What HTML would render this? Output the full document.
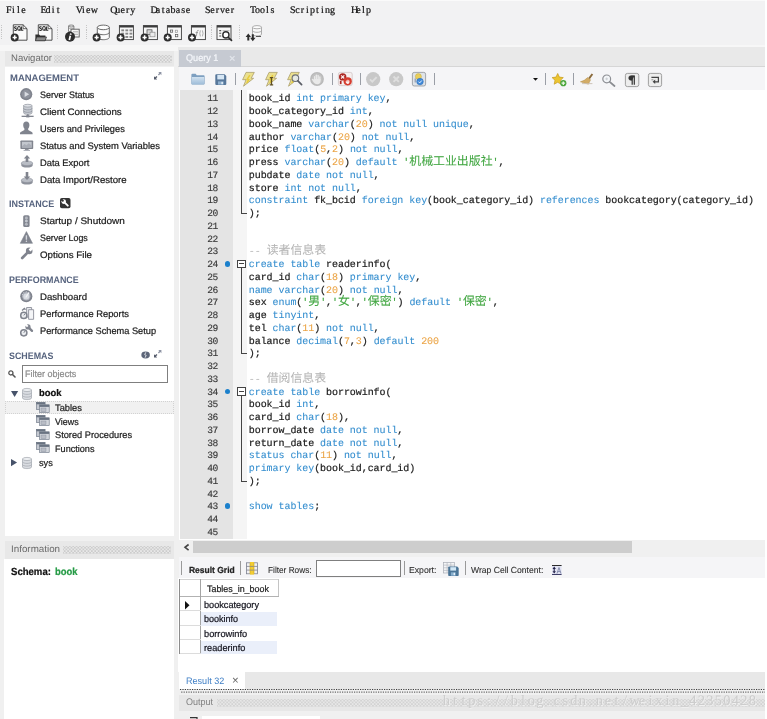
<!DOCTYPE html>
<html><head><meta charset="utf-8"><title>MySQL Workbench</title>
<style>
html,body{margin:0;padding:0}
body{width:767px;height:719px;overflow:hidden;position:relative;background:#f0f0f0;font-family:"Liberation Sans",sans-serif}
.b{position:absolute;box-sizing:border-box}
.t{position:absolute;white-space:pre;font-family:"Liberation Sans",sans-serif;-webkit-text-stroke:0.22px currentColor}
.fm{font-family:"Liberation Mono",monospace}
.fs{font-family:"Liberation Serif",serif}
.mn{font-size:10px;line-height:12px;color:#151515}
.wm{font-size:14.5px;line-height:18px;color:#cdcdcd;text-shadow:0.7px 0.7px 0 #f1f1f1;-webkit-text-stroke:0}
.wm i{display:inline-block;width:8.5px;text-align:center;font-style:normal}
.mn i{display:inline-block;width:5px;text-align:center;font-style:normal}
svg{position:absolute;overflow:visible}
#root{position:absolute;left:0;top:0;width:767px;height:719px;overflow:hidden;will-change:transform;text-rendering:geometricPrecision}
.k{color:#348ecf}.n{color:#eba445}.s{color:#43a743}.c{color:#b6b6b6}
.k,.n,.s,.c{-webkit-text-stroke:0.08px currentColor}
.ln{position:absolute;left:248.8px;white-space:pre;font:10px/13px "Liberation Mono",monospace;color:#1a1a1a;letter-spacing:-0.06px;-webkit-text-stroke:0.2px currentColor}
.no{position:absolute;left:180px;width:37.9px;text-align:right;font:9.6px/13px "Liberation Mono",monospace;color:#3a3a3a;letter-spacing:-0.4px;-webkit-text-stroke:0.15px currentColor}
.cj{display:inline-block;height:0;line-height:0;vertical-align:baseline;font-family:"Liberation Mono","Noto Sans CJK SC",monospace;font-size:11.9px;letter-spacing:0;font-weight:normal}
</style></head><body><div id="root">
<div class="b" style="left:0px;top:0px;width:767px;height:45.3px;background:#f2f2f3;"></div>
<div class="b" style="left:0px;top:45.3px;width:767px;height:5.8px;background:#f7f7f7;"></div>
<div class="b" style="left:0px;top:0px;width:767px;height:1px;background:#fafafa;"></div>
<div class="b" style="left:5px;top:50.7px;width:169px;height:15.8px;background:#e8e8e8;"></div>
<div class="b" style="left:54px;top:55px;width:118px;height:8px;background-image:radial-gradient(circle,#c6c6c6 0.55px,transparent 0.8px),radial-gradient(circle,#c6c6c6 0.55px,transparent 0.8px);background-size:3.4px 3.4px;background-position:0 0,1.7px 1.7px"></div>
<div class="b" style="left:5px;top:67px;width:169px;height:469px;background:#ffffff;"></div>
<div class="b" style="left:5px;top:541px;width:169px;height:17.5px;background:#e8e8e8;"></div>
<div class="b" style="left:63px;top:546px;width:108px;height:8px;background-image:radial-gradient(circle,#c6c6c6 0.55px,transparent 0.8px),radial-gradient(circle,#c6c6c6 0.55px,transparent 0.8px);background-size:3.4px 3.4px;background-position:0 0,1.7px 1.7px"></div>
<div class="b" style="left:4px;top:558.5px;width:170px;height:161px;background:#ffffff;"></div>
<div class="b" style="left:177.5px;top:47.4px;width:590px;height:19.9px;background:#e9e9e9;"></div>
<div class="b" style="left:177.5px;top:66.3px;width:590px;height:1px;background:#d6d6d6;"></div>
<div class="b" style="left:179.1px;top:49.7px;width:61.6px;height:17.6px;background:#c6cad2;"></div>
<div class="b" style="left:179px;top:67.3px;width:588px;height:23px;background:#f5f5f7;"></div>
<div class="b" style="left:179px;top:90.3px;width:588px;height:450px;background:#ffffff;"></div>
<div class="b" style="left:180px;top:90.3px;width:53.5px;height:448.6px;background:#e4e4e4;"></div>
<div class="b" style="left:233.3px;top:90.3px;width:14px;height:448.6px;background:#f5f5f5;"></div>
<div class="b" style="left:179px;top:540.3px;width:588px;height:17px;background:#f0f0f0;"></div>
<div class="b" style="left:193.4px;top:541px;width:439px;height:12px;background:#cdcdcd;"></div>
<div class="b" style="left:179px;top:557px;width:588px;height:21px;background:#f5f5f7;"></div>
<div class="b" style="left:178.3px;top:578px;width:588.7px;height:94px;background:#ffffff;"></div>
<div class="b" style="left:179px;top:672px;width:588px;height:16.5px;background:#e8e8e8;"></div>
<div class="b" style="left:179px;top:672px;width:66px;height:16.5px;background:#ffffff;"></div>
<svg style="left:179.600px;top:688px" width="586" height="6" viewBox="0 0 586 6"><path d="M0 1.500H586" stroke="#3c3c3c" stroke-width="1.100" stroke-dasharray="1.200 1.200"/><path d="M1.200 4.100H586" stroke="#6a6a6a" stroke-width="1.100" stroke-dasharray="1.200 1.200"/></svg>
<div class="b" style="left:179px;top:695px;width:588px;height:16.2px;background:#e7e7e7;"></div>
<div class="b" style="left:216.8px;top:698.6px;width:549px;height:8px;background-image:radial-gradient(circle,#cecece 0.55px,transparent 0.8px),radial-gradient(circle,#cecece 0.55px,transparent 0.8px);background-size:3.4px 3.4px;background-position:0 0,1.7px 1.7px"></div>
<div class="b" style="left:202.4px;top:715.5px;width:117.3px;height:4px;background:#ffffff;"></div>
<div class="b" style="left:765.3px;top:0px;width:1.7px;height:719px;background:#ffffff;"></div>
<div class="t fs mn" style="left:5.90px;top:5px"><i>F</i><i>i</i><i>l</i><i>e</i></div>
<div class="t fs mn" style="left:40.60px;top:5px"><i>E</i><i>d</i><i>i</i><i>t</i></div>
<div class="t fs mn" style="left:75.80px;top:5px"><i>V</i><i>i</i><i>e</i><i>w</i></div>
<div class="t fs mn" style="left:110.20px;top:5px"><i>Q</i><i>u</i><i>e</i><i>r</i><i>y</i></div>
<div class="t fs mn" style="left:150.60px;top:5px"><i>D</i><i>a</i><i>t</i><i>a</i><i>b</i><i>a</i><i>s</i><i>e</i></div>
<div class="t fs mn" style="left:204.90px;top:5px"><i>S</i><i>e</i><i>r</i><i>v</i><i>e</i><i>r</i></div>
<div class="t fs mn" style="left:249.90px;top:5px"><i>T</i><i>o</i><i>o</i><i>l</i><i>s</i></div>
<div class="t fs mn" style="left:289.90px;top:5px"><i>S</i><i>c</i><i>r</i><i>i</i><i>p</i><i>t</i><i>i</i><i>n</i><i>g</i></div>
<div class="t fs mn" style="left:350.90px;top:5px"><i>H</i><i>e</i><i>l</i><i>p</i></div>
<div class="t" style="left:10.70px;top:52.00px;font-size:9.6px;line-height:13px;color:#6a6a6a;transform:scaleX(0.9954);transform-origin:0 0;-webkit-text-stroke:0">Navigator</div>
<div class="t" style="left:9.70px;top:71.00px;font-size:9.4px;line-height:13px;font-weight:bold;color:#56637e;transform:scaleX(1.0101);transform-origin:0 0;-webkit-text-stroke:0">MANAGEMENT</div>
<div class="t" style="left:39.70px;top:88.00px;font-size:9.4px;line-height:13px;color:#1c1c1c;transform:scaleX(0.9570);transform-origin:0 0;">Server Status</div>
<div class="t" style="left:39.70px;top:105.00px;font-size:9.4px;line-height:13px;color:#1c1c1c;transform:scaleX(1.0380);transform-origin:0 0;">Client Connections</div>
<div class="t" style="left:39.70px;top:122.00px;font-size:9.4px;line-height:13px;color:#1c1c1c;transform:scaleX(0.9860);transform-origin:0 0;">Users and Privileges</div>
<div class="t" style="left:39.70px;top:139.00px;font-size:9.4px;line-height:13px;color:#1c1c1c;transform:scaleX(1.0017);transform-origin:0 0;">Status and System Variables</div>
<div class="t" style="left:39.70px;top:156.00px;font-size:9.4px;line-height:13px;color:#1c1c1c;transform:scaleX(0.9973);transform-origin:0 0;">Data Export</div>
<div class="t" style="left:39.70px;top:173.00px;font-size:9.4px;line-height:13px;color:#1c1c1c;transform:scaleX(1.0268);transform-origin:0 0;">Data Import/Restore</div>
<div class="t" style="left:9.20px;top:197.00px;font-size:9.4px;line-height:13px;font-weight:bold;color:#56637e;transform:scaleX(0.9567);transform-origin:0 0;-webkit-text-stroke:0">INSTANCE</div>
<div class="t" style="left:39.70px;top:214.00px;font-size:9.4px;line-height:13px;color:#1c1c1c;transform:scaleX(1.0631);transform-origin:0 0;">Startup / Shutdown</div>
<div class="t" style="left:39.70px;top:231.00px;font-size:9.4px;line-height:13px;color:#1c1c1c;transform:scaleX(0.9451);transform-origin:0 0;">Server Logs</div>
<div class="t" style="left:39.70px;top:248.00px;font-size:9.4px;line-height:13px;color:#1c1c1c;transform:scaleX(1.0388);transform-origin:0 0;">Options File</div>
<div class="t" style="left:9.20px;top:273.00px;font-size:9.4px;line-height:13px;font-weight:bold;color:#56637e;transform:scaleX(0.9492);transform-origin:0 0;-webkit-text-stroke:0">PERFORMANCE</div>
<div class="t" style="left:39.70px;top:290.00px;font-size:9.4px;line-height:13px;color:#1c1c1c;transform:scaleX(1.0264);transform-origin:0 0;">Dashboard</div>
<div class="t" style="left:39.70px;top:307.00px;font-size:9.4px;line-height:13px;color:#1c1c1c;transform:scaleX(0.9984);transform-origin:0 0;">Performance Reports</div>
<div class="t" style="left:39.70px;top:324.00px;font-size:9.4px;line-height:13px;color:#1c1c1c;transform:scaleX(0.9857);transform-origin:0 0;">Performance Schema Setup</div>
<div class="t" style="left:9.20px;top:349.00px;font-size:9.4px;line-height:13px;font-weight:bold;color:#56637e;transform:scaleX(0.9467);transform-origin:0 0;-webkit-text-stroke:0">SCHEMAS</div>
<div class="b" style="left:22.3px;top:365.3px;width:146.2px;height:17.4px;background:#ffffff;border:1px solid #7f7f7f"></div>
<div class="t" style="left:24.70px;top:367.00px;font-size:9.4px;line-height:13px;color:#8c8c8c;transform:scaleX(0.9628);transform-origin:0 0;">Filter objects</div>
<div class="b" style="left:5.2px;top:401.3px;width:168.5px;height:13px;background:#f1f1f1;border:1px dotted #d2d2d2"></div>
<div class="t" style="left:38.60px;top:387.00px;font-size:9.6px;line-height:13px;font-weight:bold;color:#111;transform:scaleX(0.9812);transform-origin:0 0;">book</div>
<div class="t" style="left:55.00px;top:401.00px;font-size:9.4px;line-height:13px;color:#1c1c1c;transform:scaleX(0.9936);transform-origin:0 0;">Tables</div>
<div class="t" style="left:55.00px;top:415.00px;font-size:9.4px;line-height:13px;color:#1c1c1c;transform:scaleX(0.9516);transform-origin:0 0;">Views</div>
<div class="t" style="left:55.00px;top:428.00px;font-size:9.4px;line-height:13px;color:#1c1c1c;transform:scaleX(0.9850);transform-origin:0 0;">Stored Procedures</div>
<div class="t" style="left:55.00px;top:442.00px;font-size:9.4px;line-height:13px;color:#1c1c1c;transform:scaleX(0.9717);transform-origin:0 0;">Functions</div>
<div class="t" style="left:38.60px;top:456.00px;font-size:9.4px;line-height:13px;color:#1c1c1c;transform:scaleX(0.9787);transform-origin:0 0;">sys</div>
<div class="t" style="left:11.10px;top:543.00px;font-size:9.6px;line-height:13px;color:#6a6a6a;transform:scaleX(1.0224);transform-origin:0 0;-webkit-text-stroke:0">Information</div>
<div class="t" style="left:11.10px;top:566.00px;font-size:10.3px;line-height:13px;font-weight:bold;color:#111;transform:scaleX(0.9293);transform-origin:0 0;">Schema:</div>
<div class="t" style="left:54.80px;top:566.00px;font-size:10.3px;line-height:13px;font-weight:bold;color:#239a44;transform:scaleX(0.9145);transform-origin:0 0;">book</div>
<div class="t" style="left:185.60px;top:52.00px;font-size:9.6px;line-height:13px;color:#f4f6fa;transform:scaleX(0.9488);transform-origin:0 0;">Query 1</div>
<div class="t" style="left:229.10px;top:52.00px;font-size:11px;line-height:14px;color:#e3e6ec;">×</div>
<div class="t" style="left:188.90px;top:564.00px;font-size:8.8px;line-height:12px;font-weight:bold;color:#222;transform:scaleX(0.9635);transform-origin:0 0;">Result Grid</div>
<div class="t" style="left:267.90px;top:564.00px;font-size:8.8px;line-height:12px;color:#2a2a2a;transform:scaleX(0.9386);transform-origin:0 0;-webkit-text-stroke:0.08px currentColor">Filter Rows:</div>
<div class="t" style="left:409.20px;top:564.00px;font-size:8.8px;line-height:12px;color:#2a2a2a;transform:scaleX(0.9828);transform-origin:0 0;-webkit-text-stroke:0.08px currentColor">Export:</div>
<div class="t" style="left:470.50px;top:564.00px;font-size:8.8px;line-height:12px;color:#2a2a2a;transform:scaleX(0.9746);transform-origin:0 0;-webkit-text-stroke:0.08px currentColor">Wrap Cell Content:</div>
<div class="b" style="left:316.3px;top:560px;width:84.3px;height:16.6px;background:#ffffff;border:1px solid #7f7f7f"></div>
<div class="b" style="left:181.0px;top:561px;width:1px;height:14px;background:#9a9a9a;"></div>
<div class="b" style="left:239.7px;top:561px;width:1px;height:14px;background:#9a9a9a;"></div>
<div class="b" style="left:404.0px;top:561px;width:1px;height:14px;background:#9a9a9a;"></div>
<div class="b" style="left:465.0px;top:561px;width:1px;height:14px;background:#9a9a9a;"></div>
<div class="b" style="left:200.6px;top:611.9px;width:76.70000000000002px;height:14.3px;background:#eaeffa;"></div>
<div class="b" style="left:200.6px;top:640.6px;width:76.70000000000002px;height:13.2px;background:#eaeffa;"></div>
<div class="b" style="left:179.7px;top:578.8px;width:99.10000000000002px;height:1px;background:#d2d2d2;"></div>
<div class="b" style="left:179.7px;top:595.8px;width:99.10000000000002px;height:1px;background:#b2b2b2;"></div>
<div class="b" style="left:179.1px;top:578.6px;width:1px;height:75.6px;background:#8c8c8c;"></div>
<div class="b" style="left:200.2px;top:578.6px;width:1px;height:75.6px;background:#a4a4a4;"></div>
<div class="b" style="left:278.3px;top:578.6px;width:1px;height:17.8px;background:#c4c4c4;"></div>
<div class="b" style="left:179.7px;top:610.3px;width:20.900000000000006px;height:1px;background:#dcdcdc;"></div>
<div class="b" style="left:179.7px;top:624.6px;width:20.900000000000006px;height:1px;background:#dcdcdc;"></div>
<div class="b" style="left:179.7px;top:639px;width:20.900000000000006px;height:1px;background:#dcdcdc;"></div>
<div class="b" style="left:179.7px;top:653.4px;width:20.900000000000006px;height:1px;background:#dcdcdc;"></div>
<div class="t" style="left:207.10px;top:583.00px;font-size:9.3px;line-height:12px;color:#222;transform:scaleX(0.9577);transform-origin:0 0;">Tables_in_book</div>
<div class="t" style="left:203.50px;top:598.00px;font-size:9.4px;line-height:13px;color:#15151f;transform:scaleX(0.9763);transform-origin:0 0;">bookcategory</div>
<div class="t" style="left:203.50px;top:612.00px;font-size:9.4px;line-height:13px;color:#15151f;transform:scaleX(0.9623);transform-origin:0 0;">bookinfo</div>
<div class="t" style="left:203.50px;top:627.00px;font-size:9.4px;line-height:13px;color:#15151f;transform:scaleX(0.9866);transform-origin:0 0;">borrowinfo</div>
<div class="t" style="left:203.50px;top:641.00px;font-size:9.4px;line-height:13px;color:#15151f;transform:scaleX(0.9804);transform-origin:0 0;">readerinfo</div>
<div class="t" style="left:185.70px;top:674.00px;font-size:9.4px;line-height:13px;color:#3f7fc6;transform:scaleX(0.9670);transform-origin:0 0;-webkit-text-stroke:0">Result 32</div>
<div class="t" style="left:232.00px;top:674.00px;font-size:11.5px;line-height:14px;color:#6a6a6a;-webkit-text-stroke:0">×</div>
<div class="t" style="left:185.50px;top:696.00px;font-size:9.5px;line-height:13px;color:#808080;transform:scaleX(0.9468);transform-origin:0 0;-webkit-text-stroke:0">Output</div>
<div class="t fs wm" style="left:442.2px;top:692px"><i>h</i><i>t</i><i>t</i><i>p</i><i>s</i><i>:</i><i>/</i><i>/</i><i>b</i><i>l</i><i>o</i><i>g</i><i>.</i><i>c</i><i>s</i><i>d</i><i>n</i><i>.</i><i>n</i><i>e</i><i>t</i><i>/</i><i>w</i><i>e</i><i>i</i><i>x</i><i>i</i><i>n</i><i>_</i><i>4</i><i>2</i><i>3</i><i>5</i><i>0</i><i>4</i><i>2</i><i>8</i></div>
<div class="no" style="top:92.28px">11</div>
<div class="no" style="top:105.03px">12</div>
<div class="no" style="top:117.78px">13</div>
<div class="no" style="top:130.53px">14</div>
<div class="no" style="top:143.28px">15</div>
<div class="no" style="top:156.03px">16</div>
<div class="no" style="top:168.78px">17</div>
<div class="no" style="top:181.53px">18</div>
<div class="no" style="top:194.28px">19</div>
<div class="no" style="top:207.03px">20</div>
<div class="no" style="top:219.78px">21</div>
<div class="no" style="top:232.53px">22</div>
<div class="no" style="top:245.28px">23</div>
<div class="no" style="top:258.03px">24</div>
<div class="no" style="top:270.78px">25</div>
<div class="no" style="top:283.53px">26</div>
<div class="no" style="top:296.28px">27</div>
<div class="no" style="top:309.03px">28</div>
<div class="no" style="top:321.78px">29</div>
<div class="no" style="top:334.53px">30</div>
<div class="no" style="top:347.28px">31</div>
<div class="no" style="top:360.03px">32</div>
<div class="no" style="top:372.78px">33</div>
<div class="no" style="top:385.53px">34</div>
<div class="no" style="top:398.28px">35</div>
<div class="no" style="top:411.03px">36</div>
<div class="no" style="top:423.78px">37</div>
<div class="no" style="top:436.53px">38</div>
<div class="no" style="top:449.28px">39</div>
<div class="no" style="top:462.03px">40</div>
<div class="no" style="top:474.78px">41</div>
<div class="no" style="top:487.53px">42</div>
<div class="no" style="top:500.28px">43</div>
<div class="no" style="top:513.03px">44</div>
<div class="no" style="top:525.78px">45</div>
<div class="ln" style="top:93.28px">book_id <span class="k">int</span> <span class="k">primary</span> <span class="k">key</span>,</div>
<div class="ln" style="top:106.03px">book_category_id <span class="k">int</span>,</div>
<div class="ln" style="top:118.78px">book_name <span class="k">varchar</span>(<span class="n">20</span>) <span class="k">not</span> <span class="k">null</span> <span class="k">unique</span>,</div>
<div class="ln" style="top:131.53px">author <span class="k">varchar</span>(<span class="n">20</span>) <span class="k">not</span> <span class="k">null</span>,</div>
<div class="ln" style="top:144.28px">price <span class="k">float</span>(<span class="n">5</span>,<span class="n">2</span>) <span class="k">not</span> <span class="k">null</span>,</div>
<div class="ln" style="top:157.03px">press <span class="k">varchar</span>(<span class="n">20</span>) <span class="k">default</span> <span class="s">&#x27;<span class="cj">机械工业出版社</span>&#x27;</span>,</div>
<div class="ln" style="top:169.78px">pubdate <span class="k">date</span> <span class="k">not</span> <span class="k">null</span>,</div>
<div class="ln" style="top:182.53px">store <span class="k">int</span> <span class="k">not</span> <span class="k">null</span>,</div>
<div class="ln" style="top:195.28px"><span class="k">constraint</span> fk_bcid <span class="k">foreign</span> <span class="k">key</span>(book_category_id) <span class="k">references</span> bookcategory(category_id)</div>
<div class="ln" style="top:208.03px">);</div>
<div class="ln" style="top:246.28px"><span class="c">-- <span class="cj">读者信息表</span></span></div>
<div class="ln" style="top:259.03px"><span class="k">create</span> <span class="k">table</span> readerinfo(</div>
<div class="ln" style="top:271.78px">card_id <span class="k">char</span>(<span class="n">18</span>) <span class="k">primary</span> <span class="k">key</span>,</div>
<div class="ln" style="top:284.53px"><span class="k">name</span> <span class="k">varchar</span>(<span class="n">20</span>) <span class="k">not</span> <span class="k">null</span>,</div>
<div class="ln" style="top:297.28px">sex <span class="k">enum</span>(<span class="s">&#x27;<span class="cj">男</span>&#x27;</span>,<span class="s">&#x27;<span class="cj">女</span>&#x27;</span>,<span class="s">&#x27;<span class="cj">保密</span>&#x27;</span>) <span class="k">default</span> <span class="s">&#x27;<span class="cj">保密</span>&#x27;</span>,</div>
<div class="ln" style="top:310.03px">age <span class="k">tinyint</span>,</div>
<div class="ln" style="top:322.78px">tel <span class="k">char</span>(<span class="n">11</span>) <span class="k">not</span> <span class="k">null</span>,</div>
<div class="ln" style="top:335.53px">balance <span class="k">decimal</span>(<span class="n">7</span>,<span class="n">3</span>) <span class="k">default</span> <span class="n">200</span></div>
<div class="ln" style="top:348.28px">);</div>
<div class="ln" style="top:373.78px"><span class="c">-- <span class="cj">借阅信息表</span></span></div>
<div class="ln" style="top:386.53px"><span class="k">create</span> <span class="k">table</span> borrowinfo(</div>
<div class="ln" style="top:399.28px">book_id <span class="k">int</span>,</div>
<div class="ln" style="top:412.03px">card_id <span class="k">char</span>(<span class="n">18</span>),</div>
<div class="ln" style="top:424.78px">borrow_date <span class="k">date</span> <span class="k">not</span> <span class="k">null</span>,</div>
<div class="ln" style="top:437.53px">return_date <span class="k">date</span> <span class="k">not</span> <span class="k">null</span>,</div>
<div class="ln" style="top:450.28px"><span class="k">status</span> <span class="k">char</span>(<span class="n">11</span>) <span class="k">not</span> <span class="k">null</span>,</div>
<div class="ln" style="top:463.03px"><span class="k">primary</span> <span class="k">key</span>(book_id,card_id)</div>
<div class="ln" style="top:475.78px">);</div>
<div class="ln" style="top:501.28px"><span class="k">show</span> <span class="k">tables</span>;</div>
<div class="b" style="left:224.6px;top:261.00px;width:5.8px;height:5.8px;border-radius:50%;background:#1b80cc"></div>
<div class="b" style="left:224.6px;top:388.50px;width:5.8px;height:5.8px;border-radius:50%;background:#1b80cc"></div>
<div class="b" style="left:224.6px;top:503.25px;width:5.8px;height:5.8px;border-radius:50%;background:#1b80cc"></div>
<div class="b" style="left:241.0px;top:90px;width:1px;height:123.9px;background:#444;"></div>
<div class="b" style="left:241px;top:213.1px;width:5.7px;height:1px;background:#444;"></div>
<div class="b" style="left:241.0px;top:267.9px;width:1px;height:86.25px;background:#444;"></div>
<div class="b" style="left:241px;top:353.34999999999997px;width:5.7px;height:1px;background:#444;"></div>
<div class="b" style="left:237.2px;top:259.5px;width:8.8px;height:8.8px;background:#ffffff;border:1px solid #444"></div>
<div class="b" style="left:239.3px;top:263.4px;width:4.6px;height:1px;background:#444;"></div>
<div class="b" style="left:241.0px;top:395.4px;width:1px;height:86.25px;background:#444;"></div>
<div class="b" style="left:241px;top:480.84999999999997px;width:5.7px;height:1px;background:#444;"></div>
<div class="b" style="left:237.2px;top:387.0px;width:8.8px;height:8.8px;background:#ffffff;border:1px solid #444"></div>
<div class="b" style="left:239.3px;top:390.9px;width:4.6px;height:1px;background:#444;"></div>
<svg style="left:20.4px;top:87.6px" width="12.4" height="12.4" viewBox="0 0 12.4 12.4"><circle cx="6.2" cy="6.2" r="6.1" fill="#80848e"/><circle cx="6.2" cy="6.2" r="4.4" fill="#8f939d"/><path d="M4.6 3.5 L9.2 6.2 L4.6 8.9Z" fill="#d9dce2"/></svg>
<svg style="left:20.5px;top:104px" width="13" height="13.5" viewBox="0 0 13 13.5"><path d="M2.6 1.6v7.2c0 .9 1.9 1.6 4.2 1.6s4.2-.7 4.2-1.6V1.6z" fill="#c9cdd4" stroke="#9398a1" stroke-width=".7"/><ellipse cx="6.8" cy="1.7" rx="4.2" ry="1.4" fill="#dfe2e7" stroke="#9398a1" stroke-width=".7"/><path d="M2.6 4.4c0 .9 1.9 1.5 4.2 1.5s4.2-.6 4.2-1.5M2.6 6.8c0 .9 1.9 1.5 4.2 1.5s4.2-.6 4.2-1.5" fill="none" stroke="#8a8f99" stroke-width=".8"/><rect x="6.1" y="10.2" width="1.4" height="2" fill="#80848e"/><rect x=".6" y="11.7" width="12" height="1.3" fill="#80848e"/><rect x="5.2" y="11.2" width="3.2" height="2.2" fill="#80848e"/></svg>
<svg style="left:20.4px;top:121px" width="12.6" height="13.4" viewBox="0 0 12.6 13.4"><path d="M6.3.4c2 0 3.1 1.4 3.1 3.6 0 1.5-.5 2.8-1.2 3.6v1.5l3.6 1.8c.5.3.8.8.8 1.4v.9H0v-.9c0-.6.3-1.1.8-1.4l3.6-1.8V7.6C3.700 6.800 3.200 5.500 3.200 4 3.200 1.800 4.300.4 6.300.4z" fill="#80848e"/></svg>
<svg style="left:20.4px;top:140px" width="13.6" height="11" viewBox="0 0 13.6 11"><rect x=".4" y=".4" width="12.8" height="8.6" rx=".8" fill="#80848e"/><rect x="1.9" y="1.8" width="9.8" height="5.8" fill="#c3c7ce"/><path d="M2 6.200 L4.500 4 L6.500 5.200 L8.800 3.200 L11.600 5.600V7.600H2z" fill="#a9adb6"/><rect x="5" y="9" width="3.600" height=".9" fill="#80848e"/><rect x="3.600" y="9.900" width="6.400" height=".9" fill="#9da1aa"/></svg>
<svg style="left:20.6px;top:155.3px" width="12" height="13" viewBox="0 0 12 13"><path d="M.3 8.200v2.200c0 1.200 2.500 2.200 5.700 2.200s5.700-1 5.700-2.200V8.200z" fill="#8d919b"/><ellipse cx="6" cy="8.200" rx="5.700" ry="2.300" fill="#b9bdc5" stroke="#8d919b" stroke-width=".5"/><path d="M6 0 L9.200 3.400 H7.300 V7 H4.700 V3.400 H2.800Z" fill="#80848e"/></svg>
<svg style="left:20.6px;top:172.3px" width="12" height="13" viewBox="0 0 12 13"><path d="M.3 8.200v2.200c0 1.200 2.500 2.200 5.700 2.200s5.700-1 5.700-2.200V8.200z" fill="#8d919b"/><ellipse cx="6" cy="8.200" rx="5.700" ry="2.300" fill="#b9bdc5" stroke="#8d919b" stroke-width=".5"/><path d="M4.700 0 H7.300 V4.400 H9.300 L6 8 L2.700 4.400 H4.700Z" fill="#80848e"/></svg>
<svg style="left:60px;top:198px" width="10.5" height="10.2" viewBox="0 0 10.5 10.2"><rect width="10.500" height="10.200" rx="1.800" fill="#333"/><path d="M3.70 3.60L7.80 7.70" stroke="#fff" stroke-width="1.9" stroke-linecap="round"/><circle cx="3.70" cy="3.60" r="2.3" fill="#fff"/><path d="M3.46 3.36L1.67 1.57" stroke="#333" stroke-width="1.84"/></svg>
<svg style="left:22.8px;top:214.5px" width="6.8" height="12.2" viewBox="0 0 6.8 12.2"><rect x=".2" y=".2" width="6.400" height="11.800" rx="1.600" fill="#80848e"/><circle cx="3.400" cy="2.900" r="1.500" fill="#b4b8c0"/><circle cx="3.400" cy="6.100" r="1.500" fill="#c4c8cf"/><circle cx="3.400" cy="9.300" r="1.500" fill="#b4b8c0"/></svg>
<svg style="left:20.2px;top:231px" width="12.8" height="12.8" viewBox="0 0 12.8 12.8"><path d="M6.400.6 L12.500 12.300 H.3Z" fill="#80848e" stroke="#80848e" stroke-width=".6" stroke-linejoin="round"/><rect x="5.700" y="4.200" width="1.400" height="4.600" rx=".5" fill="#d5d8de"/><rect x="5.700" y="9.600" width="1.400" height="1.400" rx=".4" fill="#d5d8de"/></svg>
<svg style="left:20.4px;top:247.4px" width="13" height="13.4" viewBox="0 0 13 13.4"><path d="M9.20 3.90L2.20 11.00" stroke="#80848e" stroke-width="2.7" stroke-linecap="round"/><circle cx="9.20" cy="3.90" r="3.3" fill="#80848e"/><path d="M9.55 3.55L12.10 0.96" stroke="#fff" stroke-width="2.64"/></svg>
<svg style="left:20.2px;top:289.8px" width="12.8" height="12.4" viewBox="0 0 12.8 12.4"><circle cx="6.300" cy="6.200" r="6.100" fill="#80848e"/><circle cx="6.300" cy="6.200" r="4.200" fill="#aeb2bb"/><circle cx="6.300" cy="6.600" r="3" fill="#d9dce2"/><path d="M6.100 7 L8.700 2.900" stroke="#f4f5f7" stroke-width="1.300" stroke-linecap="round"/><path d="M2 4.300l.9.500M3.500 2.300l.6.800M6.300 1.300v.9" stroke="#e2e4e9" stroke-width=".8"/></svg>
<svg style="left:20.2px;top:306.6px" width="14" height="13" viewBox="0 0 14 13"><path d="M6.600.5h5v9.600H6.600z" fill="#e9ebef" stroke="#8c909a" stroke-width=".9"/><path d="M8.600 2.700h5v9.600H8.600z" fill="#f4f5f7" stroke="#8c909a" stroke-width=".9"/><circle cx="3.800" cy="8.400" r="3.100" fill="#eceef1" stroke="#80848e" stroke-width="1.500"/><path d="M3.800 8.400 L5.100 6.600" stroke="#80848e" stroke-width="1"/><path d="M2 3.600 L4.400 1.500 L5.500 2.700" fill="none" stroke="#80848e" stroke-width="1.300"/></svg>
<svg style="left:20.2px;top:324.2px" width="14" height="13" viewBox="0 0 14 13"><circle cx="3.800" cy="8.800" r="3.100" fill="#eceef1" stroke="#80848e" stroke-width="1.500"/><path d="M3.800 8.800 L5.100 7" stroke="#80848e" stroke-width="1"/><path d="M8.00 2.90L12.00 6.90" stroke="#80848e" stroke-width="2.3" stroke-linecap="round"/><circle cx="8.00" cy="2.90" r="2.6" fill="#80848e"/><path d="M7.72 2.62L5.70 0.60" stroke="#fff" stroke-width="2.08"/></svg>
<svg style="left:140.6px;top:350.6px" width="9.2" height="8" viewBox="0 0 9.2 8"><ellipse cx="4.600" cy="3.900" rx="4.300" ry="3.500" fill="#5d6679"/><path d="M4.800 1.300L3.700 3.700L5.200 4.300L4.100 6.700" fill="none" stroke="#e8eaee" stroke-width=".9"/></svg>
<svg style="left:154.2px;top:350.4px" width="7.4" height="7.4" viewBox="0 0 8 8"><path d="M4.600 0 H8 V3.400 L6.800 2.200 L5.300 3.700 L4.300 2.700 L5.800 1.200Z" fill="#8d93a3"/><path d="M3.400 8 H0 V4.600 L1.200 5.800 L2.700 4.300 L3.700 5.300 L2.200 6.800Z" fill="#555b6b"/></svg>
<svg style="left:154px;top:72.3px" width="7.4" height="7.4" viewBox="0 0 8 8"><path d="M4.600 0 H8 V3.400 L6.800 2.200 L5.300 3.700 L4.300 2.700 L5.800 1.200Z" fill="#8d93a3"/><path d="M3.400 8 H0 V4.600 L1.200 5.800 L2.700 4.300 L3.700 5.300 L2.200 6.800Z" fill="#555b6b"/></svg>
<svg style="left:8.4px;top:370px" width="8" height="8" viewBox="0 0 8 8"><circle cx="2.900" cy="2.900" r="2.100" fill="none" stroke="#555" stroke-width="1.300"/><path d="M4.500 4.500 L7 7" stroke="#555" stroke-width="1.600" stroke-linecap="round"/></svg>
<svg style="left:10.7px;top:391.2px" width="7.2" height="6.2" viewBox="0 0 7.2 6.2"><path d="M0 0H7.200L3.600 6.100Z" fill="#47536a"/></svg>
<svg style="left:10.8px;top:459.2px" width="6.2" height="7.2" viewBox="0 0 6.2 7.2"><path d="M0 0V7.200L6.100 3.600Z" fill="#47536a"/></svg>
<svg style="left:22px;top:387.7px" width="10" height="12" viewBox="0 0 10 12"><path d="M.5 2v8c0 .9 2 1.600 4.500 1.600s4.500-.7 4.500-1.600V2z" fill="#d9dce1" stroke="#a2a6ae" stroke-width=".7"/><ellipse cx="5" cy="2" rx="4.500" ry="1.600" fill="#eceef1" stroke="#a2a6ae" stroke-width=".7"/><path d="M.5 4.800c0 .9 2 1.600 4.500 1.600s4.500-.7 4.500-1.600M.5 7.500c0 .9 2 1.600 4.500 1.600s4.500-.7 4.500-1.600" fill="none" stroke="#a2a6ae" stroke-width=".7"/></svg>
<svg style="left:22px;top:456.5px" width="10" height="12" viewBox="0 0 10 12"><path d="M.5 2v8c0 .9 2 1.600 4.500 1.600s4.500-.7 4.500-1.600V2z" fill="#d9dce1" stroke="#a2a6ae" stroke-width=".7"/><ellipse cx="5" cy="2" rx="4.500" ry="1.600" fill="#eceef1" stroke="#a2a6ae" stroke-width=".7"/><path d="M.5 4.800c0 .9 2 1.600 4.500 1.600s4.500-.7 4.500-1.600M.5 7.500c0 .9 2 1.600 4.500 1.600s4.500-.7 4.500-1.600" fill="none" stroke="#a2a6ae" stroke-width=".7"/></svg>
<svg style="left:36.3px;top:401.6px" width="13.6" height="11" viewBox="0 0 13.6 11"><rect x=".3" y=".3" width="8.800" height="7.400" fill="#c5c9d1" stroke="#6a7482" stroke-width=".6"/><rect x=".3" y=".3" width="8.800" height="2" fill="#6a7482"/><rect x="3.400" y="2.800" width="9.800" height="7.800" fill="#d3d6dc" stroke="#6a7482" stroke-width=".6"/><rect x="3.400" y="2.800" width="9.800" height="2.100" fill="#6a7482"/><rect x="5" y="6" width="5" height="3.600" fill="#b9bdc6" stroke="#858d9a" stroke-width=".4"/></svg>
<svg style="left:36.3px;top:415.3px" width="13.6" height="11" viewBox="0 0 13.6 11"><rect x=".3" y=".3" width="8.800" height="7.400" fill="#c5c9d1" stroke="#6a7482" stroke-width=".6"/><rect x=".3" y=".3" width="8.800" height="2" fill="#6a7482"/><rect x="3.400" y="2.800" width="9.800" height="7.800" fill="#d3d6dc" stroke="#6a7482" stroke-width=".6"/><rect x="3.400" y="2.800" width="9.800" height="2.100" fill="#6a7482"/><rect x="5" y="6" width="5" height="3.600" fill="#b9bdc6" stroke="#858d9a" stroke-width=".4"/></svg>
<svg style="left:36.3px;top:428.6px" width="13.6" height="11" viewBox="0 0 13.6 11"><rect x=".3" y=".3" width="8.800" height="7.400" fill="#c5c9d1" stroke="#6a7482" stroke-width=".6"/><rect x=".3" y=".3" width="8.800" height="2" fill="#6a7482"/><rect x="3.400" y="2.800" width="9.800" height="7.800" fill="#d3d6dc" stroke="#6a7482" stroke-width=".6"/><rect x="3.400" y="2.800" width="9.800" height="2.100" fill="#6a7482"/><rect x="5" y="6" width="5" height="3.600" fill="#b9bdc6" stroke="#858d9a" stroke-width=".4"/></svg>
<svg style="left:36.3px;top:442.3px" width="13.6" height="11" viewBox="0 0 13.6 11"><rect x=".3" y=".3" width="8.800" height="7.400" fill="#c5c9d1" stroke="#6a7482" stroke-width=".6"/><rect x=".3" y=".3" width="8.800" height="2" fill="#6a7482"/><rect x="3.400" y="2.800" width="9.800" height="7.800" fill="#d3d6dc" stroke="#6a7482" stroke-width=".6"/><rect x="3.400" y="2.800" width="9.800" height="2.100" fill="#6a7482"/><rect x="5" y="6" width="5" height="3.600" fill="#b9bdc6" stroke="#858d9a" stroke-width=".4"/></svg>
<div class="b" style="left:1.2000000000000002px;top:25px;width:1.2px;height:14.5px;background:repeating-linear-gradient(180deg,#c6c6c6 0 1.1px,transparent 1.1px 2.2px)"></div>
<div class="b" style="left:57.1px;top:25px;width:1.2px;height:14.5px;background:repeating-linear-gradient(180deg,#c6c6c6 0 1.1px,transparent 1.1px 2.2px)"></div>
<div class="b" style="left:86.30000000000001px;top:25px;width:1.2px;height:14.5px;background:repeating-linear-gradient(180deg,#c6c6c6 0 1.1px,transparent 1.1px 2.2px)"></div>
<div class="b" style="left:210.6px;top:25px;width:1.2px;height:14.5px;background:repeating-linear-gradient(180deg,#c6c6c6 0 1.1px,transparent 1.1px 2.2px)"></div>
<div class="b" style="left:239.0px;top:25px;width:1.2px;height:14.5px;background:repeating-linear-gradient(180deg,#c6c6c6 0 1.1px,transparent 1.1px 2.2px)"></div>
<svg style="left:11px;top:24px" width="18" height="18" viewBox="0 0 18 18"><path d="M2.300.8h9.800l3.900 3.900v11.500H2.300z" fill="#fafafa" stroke="#3c3c3c" stroke-width=".9"/><path d="M12.100.8v3.900h3.900" fill="none" stroke="#3c3c3c" stroke-width=".8"/><g transform="translate(0.0 0.0)" fill="none" stroke="#2a2a2a" stroke-width="1.05"><path d="M5.700 3.100C4.400 2.200 3.300 2.900 3.600 3.800 4 4.700 5.900 4.500 5.700 5.700 5.500 6.600 4.100 6.600 3.300 5.900"/><ellipse cx="8" cy="4.400" rx="1.350" ry="1.900"/><path d="M8.400 5.600L9.500 6.700M10.600 2.400V6.300H12.300"/></g><circle cx="3.7" cy="13.4" r="4.0" fill="#2d2d2d"/><path d="M1.6 13.4H5.800000000000001M3.7 11.3V15.5" stroke="#fff" stroke-width="1.500"/></svg>
<svg style="left:34.7px;top:24px" width="18" height="18" viewBox="0 0 18 18"><path d="M3.300.8h9.800l3.900 3.900v11.500H3.300z" fill="#fafafa" stroke="#3c3c3c" stroke-width=".9"/><path d="M13.100.8v3.900h3.900" fill="none" stroke="#3c3c3c" stroke-width=".8"/><g transform="translate(1.0 0.0)" fill="none" stroke="#2a2a2a" stroke-width="1.05"><path d="M5.700 3.100C4.400 2.200 3.300 2.900 3.600 3.800 4 4.700 5.900 4.500 5.700 5.700 5.500 6.600 4.100 6.600 3.300 5.900"/><ellipse cx="8" cy="4.400" rx="1.350" ry="1.900"/><path d="M8.400 5.600L9.500 6.700M10.600 2.400V6.300H12.300"/></g><path d="M.4 10.400h3.700l1 1.200h5.300v5.200H.4z" fill="#2f2f2f"/><path d="M1.700 13h9.800l-1.400 3.800H.4z" fill="#8a8a8a" stroke="#2f2f2f" stroke-width=".7"/></svg>
<svg style="left:63.5px;top:24px" width="17" height="18" viewBox="0 0 17 18"><path d="M4.500 2v5.500h5.400V2z" fill="#f4f4f4" stroke="#6e6e6e" stroke-width=".8"/><ellipse cx="7.200" cy="2" rx="2.700" ry="1" fill="#f4f4f4" stroke="#6e6e6e" stroke-width=".8"/><path d="M4.500 4.200q2.700 1.400 5.400 0" fill="none" stroke="#8a8a8a" stroke-width=".6"/><rect x="7" y="5.200" width="8.200" height="7.800" fill="#f6f6f6" stroke="#5a5a5a" stroke-width=".9"/><path d="M9 7.800h5M9 10.300h5" stroke="#9a9a9a" stroke-width=".8"/><circle cx="6" cy="12.800" r="5" fill="#2d2d2d"/><path d="M6.900 9.400l-.4 1.300M6.300 11.700L5.300 16" stroke="#fff" stroke-width="1.700"/></svg>
<svg style="left:92px;top:24px" width="18" height="18" viewBox="0 0 18 18"><path d="M5.300 3.400v10c0 1.300 2.700 2.300 6 2.300s6-1 6-2.300v-10z" fill="#fbfbfb" stroke="#5a5a5a" stroke-width=".9"/><ellipse cx="11.300" cy="3.400" rx="6" ry="2.300" fill="#fdfdfd" stroke="#5a5a5a" stroke-width=".9"/><path d="M5.300 8.400c0 1.300 2.700 2.300 6 2.300s6-1 6-2.300" fill="none" stroke="#5a5a5a" stroke-width=".9"/><circle cx="4.6" cy="13.4" r="4.0" fill="#2d2d2d"/><path d="M2.4999999999999996 13.4H6.699999999999999M4.6 11.3V15.5" stroke="#fff" stroke-width="1.500"/></svg>
<svg style="left:116.5px;top:24px" width="18" height="18" viewBox="0 0 18 18"><rect x="2.4" y="1.600" width="14" height="14" fill="#f7f7f7" stroke="#3c3c3c" stroke-width=".9"/><rect x="2.4" y="1.600" width="14" height="1.900" fill="#3c3c3c"/><rect x="4.3" y="5.4" width="2.800" height="1.900" fill="#868686"/><rect x="8.399999999999999" y="5.4" width="2.800" height="1.900" fill="#868686"/><rect x="12.5" y="5.4" width="2.800" height="1.900" fill="#868686"/><rect x="4.3" y="8.7" width="2.800" height="1.900" fill="#868686"/><rect x="8.399999999999999" y="8.7" width="2.800" height="1.900" fill="#868686"/><rect x="12.5" y="8.7" width="2.800" height="1.900" fill="#868686"/><rect x="4.3" y="12.0" width="2.800" height="1.900" fill="#868686"/><rect x="8.399999999999999" y="12.0" width="2.800" height="1.900" fill="#868686"/><rect x="12.5" y="12.0" width="2.800" height="1.900" fill="#868686"/><circle cx="3.6" cy="13.4" r="4.0" fill="#2d2d2d"/><path d="M1.5 13.4H5.7M3.6 11.3V15.5" stroke="#fff" stroke-width="1.500"/></svg>
<svg style="left:140.5px;top:24px" width="18" height="18" viewBox="0 0 18 18"><rect x="2.4" y="1.600" width="14" height="14" fill="#f7f7f7" stroke="#3c3c3c" stroke-width=".9"/><rect x="2.4" y="1.600" width="14" height="1.900" fill="#3c3c3c"/><rect x="6" y="5.800" width="5" height="4.600" fill="#d9d9d9" stroke="#4a4a4a" stroke-width=".7"/><rect x="9" y="8.200" width="5" height="4.600" fill="#ececec" stroke="#8a8a8a" stroke-width=".7"/><circle cx="3.6" cy="13.4" r="4.0" fill="#2d2d2d"/><path d="M1.5 13.4H5.7M3.6 11.3V15.5" stroke="#fff" stroke-width="1.500"/></svg>
<svg style="left:164.6px;top:24px" width="18" height="18" viewBox="0 0 18 18"><rect x="2.4" y="1.600" width="14" height="14" fill="#f7f7f7" stroke="#3c3c3c" stroke-width=".9"/><rect x="2.4" y="1.600" width="14" height="1.900" fill="#3c3c3c"/><rect x="5.500" y="6" width="2.200" height="2.200" fill="none" stroke="#555" stroke-width=".7"/><rect x="10.300" y="6.200" width="2.200" height="2.200" fill="none" stroke="#999" stroke-width=".7"/><rect x="10.600" y="10.600" width="2.200" height="2.200" fill="none" stroke="#555" stroke-width=".7"/><circle cx="2.7" cy="13.4" r="4.0" fill="#2d2d2d"/><path d="M0.6000000000000001 13.4H4.800000000000001M2.7 11.3V15.5" stroke="#fff" stroke-width="1.500"/></svg>
<svg style="left:188.6px;top:24px" width="18" height="18" viewBox="0 0 18 18"><rect x="2.4" y="1.600" width="14" height="14" fill="#f7f7f7" stroke="#3c3c3c" stroke-width=".9"/><rect x="2.4" y="1.600" width="14" height="1.900" fill="#3c3c3c"/><path d="M9.600 6.400q-1.300-.3-1.500 1l-.8 5M6.600 8.600h2.400" fill="none" stroke="#8a8a8a" stroke-width=".8"/><path d="M11.400 6.400q-1.300 3 0 6M13.400 6.400q1.300 3 0 6" fill="none" stroke="#9a9a9a" stroke-width=".8"/><circle cx="3" cy="13.4" r="4.0" fill="#2d2d2d"/><path d="M0.8999999999999999 13.4H5.1M3 11.3V15.5" stroke="#fff" stroke-width="1.500"/></svg>
<svg style="left:215.4px;top:24px" width="18" height="18" viewBox="0 0 18 18"><rect x="2" y="1.600" width="14" height="14" fill="#f7f7f7" stroke="#3c3c3c" stroke-width=".9"/><rect x="2" y="1.600" width="14" height="1.900" fill="#3c3c3c"/><path d="M4.200 6.600h2M4.200 9.300h2M4.200 12h2" stroke="#555" stroke-width="1.100"/><path d="M7.500 6.600h7M7.500 12.800h3" stroke="#aaa" stroke-width=".8"/><circle cx="10.900" cy="10.900" r="3.100" fill="#fff" stroke="#2d2d2d" stroke-width="1.400"/><path d="M13.300 13.300L16.500 16.300" stroke="#2d2d2d" stroke-width="1.700" stroke-linecap="round"/></svg>
<svg style="left:244.5px;top:24px" width="18" height="18" viewBox="0 0 18 18"><path d="M7.500 3.200v7c0 1 2 1.700 4.500 1.700s4.500-.7 4.500-1.700v-7z" fill="#f8f8f8" stroke="#9a9a9a" stroke-width=".8"/><ellipse cx="12" cy="3.200" rx="4.500" ry="1.600" fill="#fcfcfc" stroke="#9a9a9a" stroke-width=".8"/><path d="M7.500 6.600c0 1 2 1.700 4.500 1.700s4.500-.7 4.500-1.700" fill="none" stroke="#9a9a9a" stroke-width=".8"/><path d="M3.300 9.600 L6 13 H4.300 V16.500 H2.300 V13 H.6Z" fill="#2d2d2d"/><path d="M7.800 17.200 L5.100 13.800 H6.800 V10.300 H8.800 V13.800 H10.500Z" fill="#2d2d2d"/><path d="M11 12.500h5" stroke="#555" stroke-width="1"/></svg>
<div class="b" style="left:235.2px;top:73.3px;width:1px;height:12.100000000000009px;background:#9a9ea6;"></div>
<div class="b" style="left:331.7px;top:73.3px;width:1px;height:12.100000000000009px;background:#9a9ea6;"></div>
<div class="b" style="left:359.9px;top:73.3px;width:1px;height:12.100000000000009px;background:#9a9ea6;"></div>
<div class="b" style="left:433.9px;top:73.3px;width:1px;height:12.100000000000009px;background:#9a9ea6;"></div>
<div class="b" style="left:545.0px;top:73.3px;width:1px;height:12.100000000000009px;background:#9a9ea6;"></div>
<div class="b" style="left:572.8px;top:73.3px;width:1px;height:12.100000000000009px;background:#9a9ea6;"></div>
<svg style="left:191px;top:73px" width="14" height="12" viewBox="0 0 14 12"><defs><linearGradient id="fg" x1="0" y1="0" x2="0" y2="1"><stop offset="0" stop-color="#d2e2f0"/><stop offset="1" stop-color="#9fbdd9"/></linearGradient></defs><path d="M.4 1.800q0-1 1-1h3.200l1.200 1.400h6.800q1 0 1 1v7.600q0 .8-.8.800H1.200q-.8 0-.8-.8z" fill="#7d9fc0"/><path d="M.9 3.900h12.200v6.800q0 .5-.5.500H1.400q-.5 0-.5-.5z" fill="url(#fg)"/></svg>
<svg style="left:214.8px;top:73.8px" width="11.6" height="11.4" viewBox="0 0 11.6 11.4"><path d="M.3 1.300q0-1 1-1h8.400l1.600 1.600v8.100q0 1-1 1H1.300q-1 0-1-1z" fill="#57779a"/><rect x="2.300" y="1" width="6.800" height="4.400" fill="#d6e6f4"/><rect x="3" y="7.400" width="5.600" height="3.200" fill="#8fb0cf"/><rect x="6.400" y="7.900" width="1.500" height="2.300" fill="#e4eef7"/></svg>
<svg style="left:242.2px;top:72.2px" width="12.5" height="14.5" viewBox="0 0 12.5 14.5"><path d="M4 .4h8.300L9.200 6.300h2.400L1.500 14.200l2.500-6.500H.6z" fill="#ebe08e" stroke="#a39560" stroke-width=".7" stroke-linejoin="round"/><path d="M7.800 3.200L5.200 7.300L6.800 7.700L4.800 10.800" fill="none" stroke="#e7cb3c" stroke-width="1.500"/></svg>
<svg style="left:265px;top:72.2px" width="12.5" height="14.5" viewBox="0 0 12.5 14.5"><path d="M4 .4h8.300L9.200 6.300h2.400L1.500 14.200l2.500-6.500H.6z" fill="#ebe08e" stroke="#a39560" stroke-width=".7" stroke-linejoin="round"/><path d="M7.800 3.200L5.200 7.300L6.800 7.700L4.800 10.800" fill="none" stroke="#e7cb3c" stroke-width="1.500"/><path d="M4.800 5.600h3.400M6.500 5.600v7.200M4.800 12.800h3.400" stroke="#5f4e1e" stroke-width="1.300" fill="none"/></svg>
<svg style="left:286.6px;top:72.2px" width="12.5" height="14.5" viewBox="0 0 12.5 14.5"><path d="M4 .4h8.300L9.200 6.300h2.400L1.500 14.200l2.500-6.500H.6z" fill="#ebe08e" stroke="#a39560" stroke-width=".7" stroke-linejoin="round"/><path d="M7.800 3.200L5.200 7.300L6.800 7.700L4.800 10.800" fill="none" stroke="#e7cb3c" stroke-width="1.500"/><circle cx="8.400" cy="6.200" r="3.300" fill="#e6edf5" fill-opacity=".85" stroke="#6d7078" stroke-width="1.100"/><path d="M10.900 8.800L14.600 12.600" stroke="#5a5d66" stroke-width="1.700" stroke-linecap="round"/></svg>
<svg style="left:310.2px;top:72px" width="14" height="14" viewBox="0 0 14 14"><circle cx="7" cy="7" r="6.900" fill="#b9b9b9"/><circle cx="7" cy="7" r="5.700" fill="#c2c2c2"/><rect x="3.92" y="3.92" width="1.43" height="4.68" rx="0.72" fill="#e9e9e9"/><rect x="5.67" y="2.62" width="1.43" height="5.98" rx="0.72" fill="#e9e9e9"/><rect x="7.43" y="2.88" width="1.43" height="5.72" rx="0.72" fill="#e9e9e9"/><rect x="9.12" y="4.18" width="1.43" height="4.42" rx="0.72" fill="#e9e9e9"/><path d="M3.85 7.04h6.76v2.08q0 3.12 -3.38 3.12q-2.34 0 -3.64 -2.08l-1.95 -2.86q0.91 -1.04 2.21 0.39z" fill="#e9e9e9"/></svg>
<svg style="left:337.8px;top:72.4px" width="14.6" height="14" viewBox="0 0 14.6 14"><rect x=".4" y=".4" width="13.800" height="13.200" rx="1.800" fill="#f5efef" stroke="#cdbfbf" stroke-width=".7"/><circle cx="4.700" cy="4.900" r="3.700" fill="#ad2823"/><path d="M3.100 3.300l3.200 3.200M6.300 3.300l-3.200 3.200" stroke="#fbeeee" stroke-width="1.200"/><path d="M2.700 8.800v3.300" stroke="#ad2823" stroke-width="1.700"/><circle cx="9.700" cy="9.300" r="4.100" fill="#d63c2e"/><rect x="8.38" y="8.19" width="0.64" height="2.09" rx="0.32" fill="#fdf0ee"/><rect x="9.16" y="7.61" width="0.64" height="2.67" rx="0.32" fill="#fdf0ee"/><rect x="9.95" y="7.73" width="0.64" height="2.55" rx="0.32" fill="#fdf0ee"/><rect x="10.70" y="8.31" width="0.64" height="1.97" rx="0.32" fill="#fdf0ee"/><path d="M8.35 9.58h3.02v0.93q0 1.39 -1.51 1.39q-1.04 0 -1.62 -0.93l-0.87 -1.28q0.41 -0.46 0.99 0.17z" fill="#fdf0ee"/></svg>
<svg style="left:366px;top:72px" width="14.5" height="14.5" viewBox="0 0 14.5 14.5"><circle cx="7.200" cy="7.200" r="7.100" fill="#c8c8c8"/><path d="M3.900 7.400l2.400 2.300 4.300-4.600" fill="none" stroke="#dedede" stroke-width="1.900"/></svg>
<svg style="left:388.8px;top:72px" width="14.5" height="14.5" viewBox="0 0 14.5 14.5"><circle cx="7.200" cy="7.200" r="7.100" fill="#c8c8c8"/><path d="M4.500 4.500l5.400 5.400M9.900 4.500l-5.400 5.400" fill="none" stroke="#dedede" stroke-width="1.900"/></svg>
<svg style="left:412px;top:72px" width="14" height="14.4" viewBox="0 0 14 14.4"><rect x=".4" y=".4" width="13.200" height="13.600" rx="1.800" fill="#dfe3e8" stroke="#8e9399" stroke-width=".8"/><circle cx="6.400" cy="4.600" r="3" fill="#e9cf5b" stroke="#c4a83c" stroke-width=".5"/><circle cx="8" cy="9.600" r="3.300" fill="#3f88d8" stroke="#2f6db5" stroke-width=".5"/><path d="M6.400 9.600l1.300 1.300 2.100-2.400" fill="none" stroke="#e8f1fb" stroke-width="1"/><path d="M3.200 6.500v4" stroke="#7d8da3" stroke-width="1"/></svg>
<svg style="left:533px;top:78px" width="5" height="3" viewBox="0 0 5 3"><path d="M0 0H5L2.500 2.800Z" fill="#111"/></svg>
<svg style="left:552px;top:73.4px" width="15" height="13.6" viewBox="0 0 15 13.6"><path d="M5.700.5l1.700 3.600 3.900.5-2.900 2.700.8 3.900-3.500-1.900-3.500 1.900.8-3.900L.1 4.600l3.900-.5z" fill="#ecc531" stroke="#c59a1d" stroke-width=".7" stroke-linejoin="round"/><circle cx="11.300" cy="10.200" r="3.100" fill="#4aa63c"/><path d="M9.500 10.200h3.600M11.300 8.400v3.600" stroke="#eaf6e6" stroke-width="1.300"/></svg>
<svg style="left:579.6px;top:73.4px" width="14.4" height="12.6" viewBox="0 0 14.4 12.6"><path d="M11.600.4l1.600 1.200-3.400 4.600-1.500-1.100z" fill="#8a6a3c"/><path d="M7.600 4.600l3 2.200-2.200 4.400-8-2.400q3.800-.6 7.200-4.200z" fill="#d3ac66" stroke="#b58f4b" stroke-width=".5"/><path d="M2 10.600h10.400" stroke="#c9c0b2" stroke-width=".9"/></svg>
<svg style="left:602.4px;top:73.6px" width="14" height="13" viewBox="0 0 14 13"><circle cx="4.700" cy="4.900" r="3.900" fill="#f3f5f8" stroke="#8d8f94" stroke-width="1.200"/><path d="M3.300 4.900h2.800M4.700 3.500v2.800" stroke="#c3c6cc" stroke-width=".8"/><path d="M7.700 7.900L12.500 12" stroke="#8a8c91" stroke-width="1.800" stroke-linecap="round"/></svg>
<svg style="left:625px;top:72.6px" width="14.2" height="14" viewBox="0 0 14.2 14"><rect x=".4" y=".4" width="13.400" height="13.200" rx="2" fill="#ededed" stroke="#8b8b8b" stroke-width=".8"/><path d="M9.600 2.700H6a2.300 2.300 0 0 0 0 4.600H7" fill="#333" stroke="#333" stroke-width=".6"/><path d="M7.200 2.700v9M9.300 2.700v9" stroke="#333" stroke-width="1.200"/></svg>
<svg style="left:648.4px;top:72.6px" width="14" height="14" viewBox="0 0 14 14"><rect x=".4" y=".4" width="13.200" height="13.200" rx="2" fill="#ededed" stroke="#8b8b8b" stroke-width=".8"/><path d="M3.400 4.400h7v4.400H6" fill="none" stroke="#444" stroke-width="1.200"/><path d="M7.200 6.600L4.600 8.800l2.600 2.200z" fill="#444"/><path d="M3.400 6.800h2" stroke="#888" stroke-width=".9"/></svg>
<svg style="left:245.8px;top:562.4px" width="11.8" height="12.6" viewBox="0 0 11.8 12.6"><rect x=".4" y=".8" width="11" height="11" fill="#f1f1f4" stroke="#7d8090" stroke-width=".8"/><rect x="4" y="0" width="4" height="12.600" fill="#f3cd32"/><path d="M.4 4.400h11M.4 8.100h11" stroke="#7d8090" stroke-width=".8"/><path d="M4 .8v11M8 .8v11" stroke="#c9a525" stroke-width=".6"/></svg>
<svg style="left:443px;top:561.6px" width="16.2" height="14.4" viewBox="0 0 16.2 14.4"><rect x=".4" y=".4" width="11.200" height="10.600" fill="#f4f5f7" stroke="#a9adb5" stroke-width=".7"/><path d="M.4 3.100h11.200M.4 5.800h11.200M.4 8.400h11.200M4.100.4v10.600M7.800.4v10.600" stroke="#b4b8c0" stroke-width=".7"/><path d="M5.200 5.200q0-.8.800-.8h8.200l1.500 1.500v7.400q0 .8-.8.800H6q-.8 0-.8-.8z" fill="#4a7496"/><rect x="7.300" y="5.200" width="5.800" height="3.400" fill="#d2e8f7"/><rect x="7.900" y="10.300" width="4.800" height="3.400" fill="#86aecd"/><rect x="10.600" y="10.800" width="1.400" height="2.400" fill="#e4f0fa"/></svg>
<svg style="left:551.8px;top:564.8px" width="9.8" height="10" viewBox="0 0 9.8 10"><rect x="0" y=".8" width="9.600" height="8.600" fill="#e3e4f3"/><path d="M0 .5h9.600" stroke="#2b2b2b" stroke-width="1"/><path d="M0 9.500h9.600" stroke="#3b3b66" stroke-width="1"/><path d="M2.200 1.600L3.900 3.900H.5zM2.200 8.600L3.900 6.300H.5z" fill="#22224a"/><path d="M2.200 3.500v3.200" stroke="#22224a" stroke-width="1.100"/><path d="M5 8.600L7 2.500L9 8.600M5.700 6.600h2.600" fill="none" stroke="#7e86a8" stroke-width=".9"/></svg>
<svg style="left:185px;top:600.6px" width="4.6" height="8.4" viewBox="0 0 4.6 8.4"><path d="M0 0V8.400L4.500 4.200Z" fill="#111"/></svg>
<svg style="left:189.6px;top:717px" width="8" height="3" viewBox="0 0 8 3"><path d="M0 .6h7v2.400" fill="none" stroke="#333" stroke-width="1.200"/></svg>
<svg style="left:183.6px;top:543.6px" width="5.4" height="6.8" viewBox="0 0 5.4 6.8"><path d="M4.600 .5L1 3.300L4.600 6.100" fill="none" stroke="#444" stroke-width="1.600"/></svg>
</div></body></html>
